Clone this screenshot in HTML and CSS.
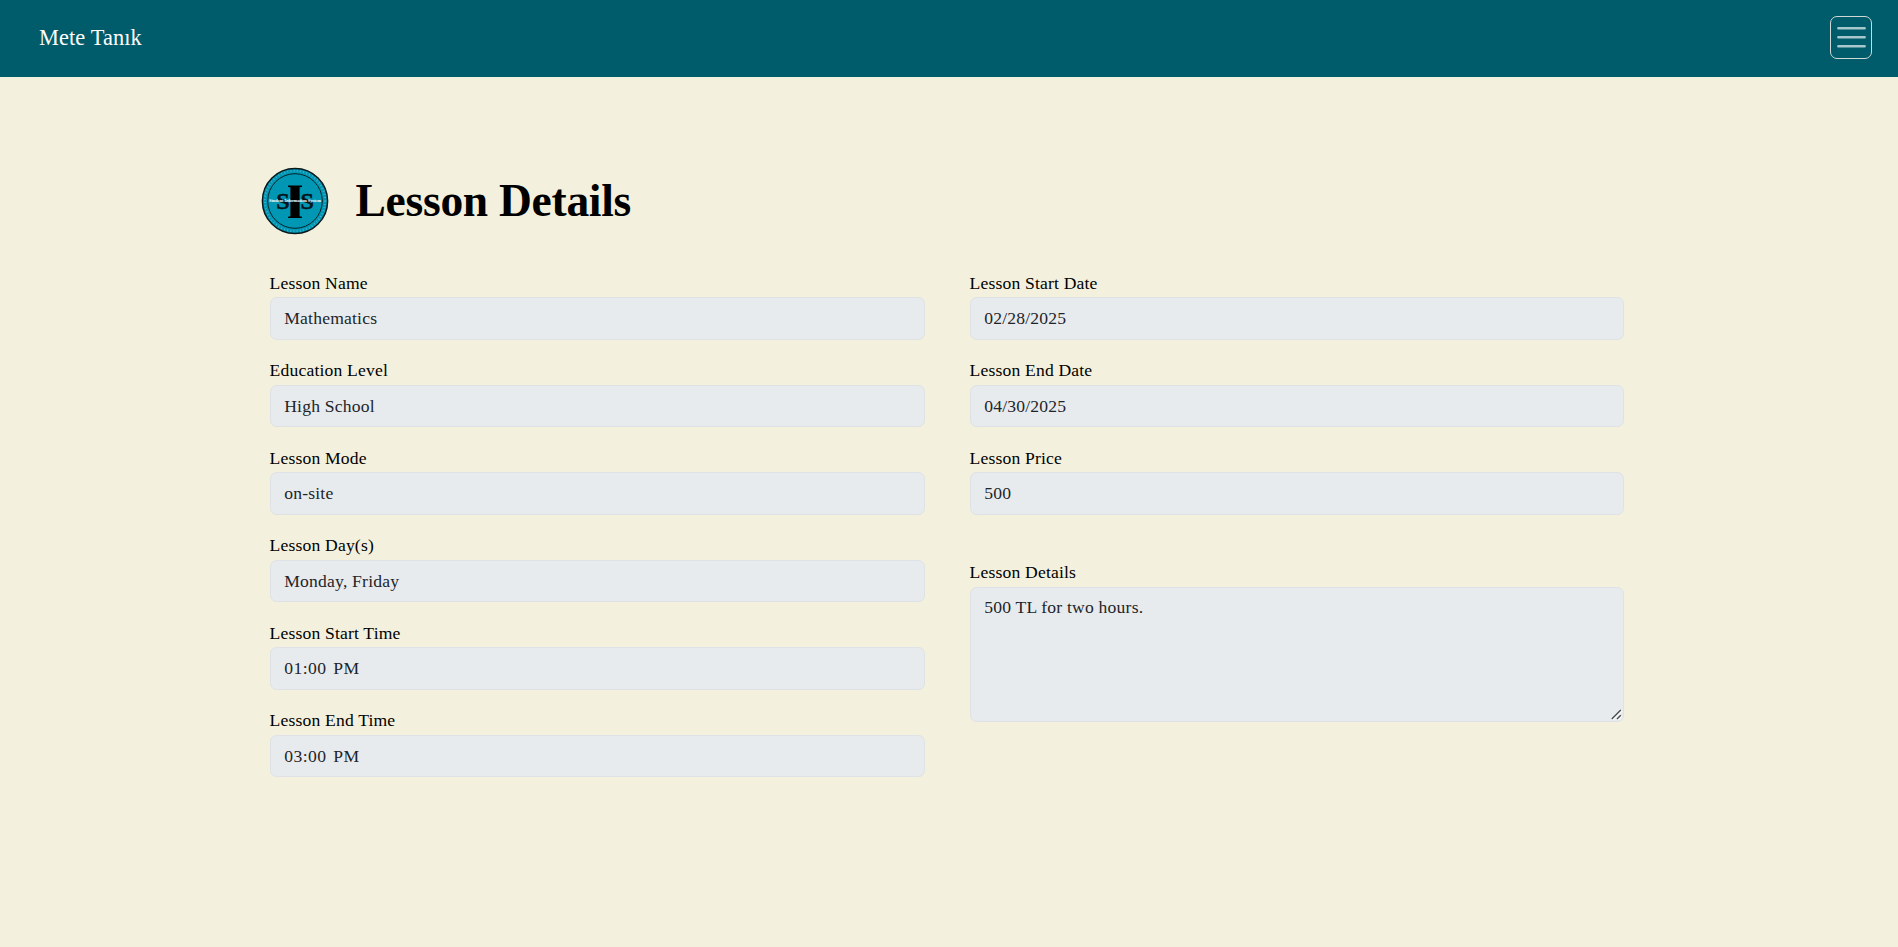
FILE: index.html
```html
<!DOCTYPE html>
<html lang="en">
<head>
<meta charset="utf-8">
<title>Lesson Details</title>
<link rel="stylesheet" href="styles.css">
</head>
<body>
<nav class="navbar">
  <span class="brand">Mete Tanık</span>
  <button class="toggler" aria-label="Menu">
    <svg viewBox="0 0 30 30" width="33" height="33"><path d="M3 6.6h24M3 14.8h24M3 22.9h24" stroke="#fff" stroke-opacity=".66" stroke-width="2.2" stroke-linecap="round"/></svg>
  </button>
</nav>
<main class="page">
  <header class="heading">
    <svg class="logo" viewBox="-34 -34 68 68" width="68" height="68">
      <circle r="32.6" fill="#0097b5" stroke="#08181d" stroke-width="1.5"/>
      <circle r="30.2" fill="none" stroke="#8fd0dd" stroke-opacity=".5" stroke-width="2.2" stroke-dasharray=".8 2.4"/>
      <circle r="27.3" fill="none" stroke="#08222a" stroke-width="1"/>
      <text class="logo-letter" x="-12" y="8.2">S</text>
      <text class="logo-letter" x="12.3" y="8.2">S</text>
      <path d="M-7-15.5H7v1.4l-2.4.4v29l2.4.4v1.4H-7v-1.4l2.4-.4v-29l-2.4-.4z" fill="#000"/>
      <text class="logo-caption" x="0" y="1.2" textLength="52">Student Information System</text>
    </svg>
    <h1 class="title">Lesson Details</h1>
  </header>
  <form class="columns">
    <div class="column">
      <label class="field">Lesson Name<input class="control" value="Mathematics" readonly></label>
      <label class="field">Education Level<input class="control" value="High School" readonly></label>
      <label class="field">Lesson Mode<input class="control" value="on-site" readonly></label>
      <label class="field">Lesson Day(s)<input class="control" value="Monday, Friday" readonly></label>
      <label class="field">Lesson Start Time<input class="control time" value="01:00 PM" readonly></label>
      <label class="field">Lesson End Time<input class="control time" value="03:00 PM" readonly></label>
    </div>
    <div class="column">
      <label class="field">Lesson Start Date<input class="control" value="02/28/2025" readonly></label>
      <label class="field">Lesson End Date<input class="control" value="04/30/2025" readonly></label>
      <label class="field">Lesson Price<input class="control" value="500" readonly></label>
      <label class="field details">Lesson Details<textarea class="control area" readonly>500 TL for two hours.</textarea>
        <svg class="grip" viewBox="0 0 11 11" width="11" height="11"><path d="M.8 10 9.8 1M6 10l3.8-3.8" stroke="#fff" stroke-width="1.4" transform="translate(1 1)"/><path d="M.8 10 9.8 1M6 10l3.8-3.8" stroke="#4a4c4e" stroke-width="1.4"/></svg>
      </label>
    </div>
  </form>
</main>
</body>
</html>
```
FILE: styles.css
```css
* { box-sizing: border-box; }
body {
  margin: 0;
  min-height: 947px;
  background: #f3f0dd;
  color: #000;
  font: 17.6px/26.4px "Liberation Serif", "Times New Roman", serif;
}
.navbar {
  height: 77px;
  padding: 0 26px 2px 39px;
  display: flex;
  align-items: center;
  justify-content: space-between;
  background: #005b6a;
}
.brand { color: #fff; font-size: 22.4px; line-height: 33px; letter-spacing: .1px; }
.toggler {
  width: 42px;
  height: 43px;
  padding: 0;
  display: flex;
  align-items: center;
  justify-content: center;
  border: 1px solid #d0d8d5;
  border-radius: 7px;
  background: none;
}
.page { width: 1364px; margin-left: 260.5px; padding-top: 89.5px; }
.heading { display: flex; align-items: center; gap: 27px; height: 68px; }
.logo { display: block; }
.logo-letter { font: bold 24px "Liberation Serif", serif; text-anchor: middle; fill: #02141a; stroke: #02141a; stroke-width: .5px; }
.logo-caption { font: bold 4.5px "Liberation Serif", serif; text-anchor: middle; fill: #fff; }
.title { margin: 0; font-size: 45.5px; line-height: 53px; letter-spacing: -.27px; }
.columns {
  margin-top: 35.5px;
  padding-left: 9.5px;
  display: grid;
  grid-template-columns: 655px 654px;
  column-gap: 45px;
}
.column { display: flex; flex-direction: column; gap: 17.7px; }
.field { display: block; height: 69.8px; letter-spacing: .17px; text-indent: -.4px; }
.control {
  display: block;
  width: 100%;
  height: 42.6px;
  margin-top: 1px;
  padding: 6.6px 13.2px;
  border: 1px solid #dee2e6;
  border-radius: 6.6px;
  background: #e8ebee;
  color: #212529;
  font: inherit;
  letter-spacing: .2px;
  text-indent: 0;
  outline: none;
}
.time { letter-spacing: .45px; word-spacing: 1.8px; }
.details { position: relative; height: auto; margin-top: 27px; }
.area { height: 135px; resize: none; }
.grip { position: absolute; right: 2px; bottom: 2px; fill: none; }
```
